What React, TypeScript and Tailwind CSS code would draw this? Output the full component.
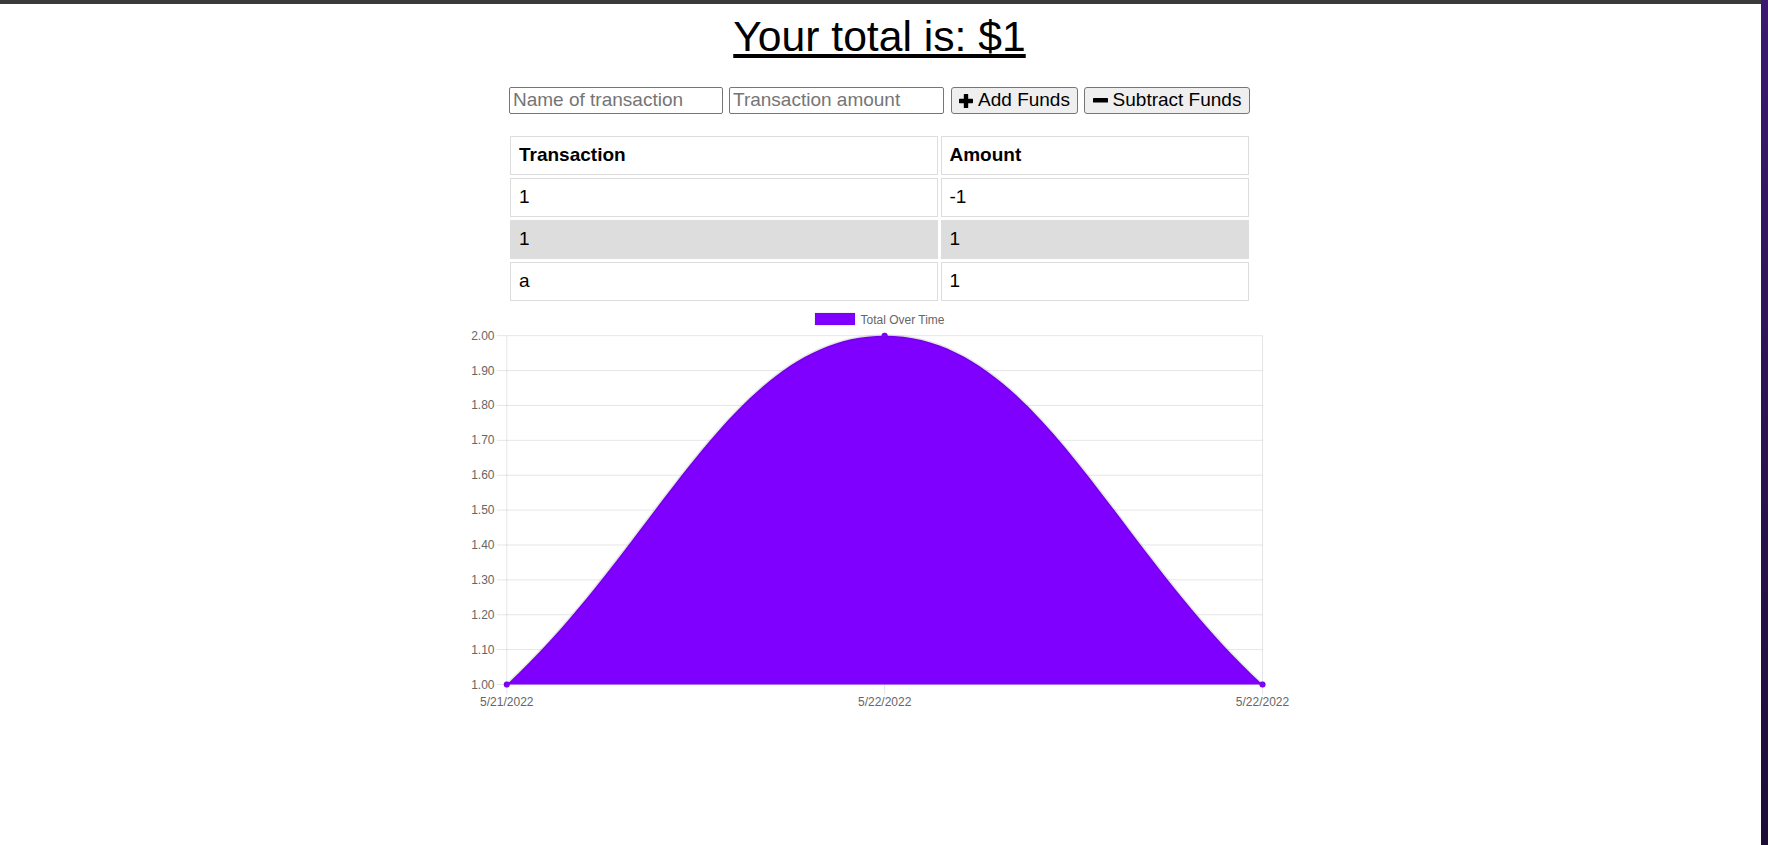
import React from 'react';

const transactions = [
  { name: '1', value: '-1' },
  { name: '1', value: '1' },
  { name: 'a', value: '1' },
];

const purple = '#8000ff';
const grid = 'rgba(0,0,0,0.1)';

// chart area inside the svg (px)
const left = 76.8;
const right = 832.5;
const top = 32.7;
const bottom = 381.5;
const mid = (left + right) / 2;
const step = (bottom - top) / 10;

const yTicks = ['2.00', '1.90', '1.80', '1.70', '1.60', '1.50', '1.40', '1.30', '1.20', '1.10', '1.00'];
const xTicks = [
  { x: left, label: '5/21/2022' },
  { x: mid, label: '5/22/2022' },
  { x: right, label: '5/22/2022' },
];

const curve = `M${left},${bottom} C227.94,241.98 303.51,${top} ${mid},${top} C605.79,${top} 681.36,241.98 ${right},${bottom}`;

const PlusIcon = () => (
  <svg width={14} height={14} viewBox="0 0 14 14" className="shrink-0">
    <path d="M4.8 0.6 Q4.8 0 5.4 0 H8.6 Q9.2 0 9.2 0.6 V4.8 H13.4 Q14 4.8 14 5.4 V8.6 Q14 9.2 13.4 9.2 H9.2 V13.4 Q9.2 14 8.6 14 H5.4 Q4.8 14 4.8 13.4 V9.2 H0.6 Q0 9.2 0 8.6 V5.4 Q0 4.8 0.6 4.8 H4.8 Z" fill="#000" />
  </svg>
);

const MinusIcon = () => (
  <svg width={15} height={5} viewBox="0 0 15 5" className="shrink-0">
    <rect x={0} y={0} width={15} height={4.5} rx={0.6} fill="#000" />
  </svg>
);

const Chart: React.FC = () => (
  <svg width={900} height={420} className="mt-[2px] shrink-0" style={{ fontFamily: '"Liberation Sans", Arial, sans-serif' }}>
    {/* legend */}
    <rect x={385} y={10} width={40} height={12} fill={purple} stroke={grid} strokeWidth={1} />
    <text x={430.5} y={21} fontSize={12} fill="#666">Total Over Time</text>

    {/* grid */}
    {yTicks.map((t, i) => (
      <g key={t}>
        <line x1={left - 10} x2={right} y1={top + i * step} y2={top + i * step} stroke={grid} strokeWidth={1} />
        <text x={64.5} y={top + i * step} fontSize={12} fill="#666" textAnchor="end" dominantBaseline="central">{t}</text>
      </g>
    ))}
    {xTicks.map((t, i) => (
      <g key={i}>
        <line x1={t.x} x2={t.x} y1={top} y2={bottom + 10} stroke={grid} strokeWidth={1} />
        <text x={t.x} y={403} fontSize={12} fill="#666" textAnchor="middle">{t.label}</text>
      </g>
    ))}

    {/* dataset */}
    <path d={`${curve} L${right},${bottom} L${left},${bottom} Z`} fill={purple} />
    <path d={curve} fill="none" stroke={grid} strokeWidth={3} />
    {[[left, bottom], [mid, top], [right, bottom]].map(([cx, cy], i) => (
      <circle key={i} cx={cx} cy={cy} r={3} fill={purple} stroke={grid} strokeWidth={1} />
    ))}
  </svg>
);

const Cell: React.FC<{ children: React.ReactNode; bold?: boolean; shaded?: boolean }> = ({ children, bold, shaded }) => (
  <div
    className={`flex h-[39.3px] items-center border border-[#dddddd] pl-[8px] text-[19px] ${bold ? 'font-bold' : ''} ${
      shaded ? 'bg-[#dddddd]' : 'bg-white'
    }`}
  >
    {children}
  </div>
);

export default function App() {
  return (
    <div className="flex h-[845px] w-full overflow-hidden bg-white" style={{ fontFamily: '"Liberation Sans", Arial, sans-serif' }}>
      <div className="flex min-w-0 flex-1 flex-col">
        <div className="h-[4px] shrink-0 bg-[#3a393c]" />

        <div className="flex flex-col items-center pr-[2px] text-black">
          {/* Total */}
          <h1 className="mt-[8px] text-[42.67px] leading-[48px] underline">Your total is: $1</h1>

          {/* Form */}
          <div className="mt-[27px] flex h-[27px] items-stretch">
            <input
              type="text"
              placeholder="Name of transaction"
              className="w-[214px] rounded-[2px] border border-[#767676] bg-white px-[3px] text-[19px] placeholder:text-[#757575]"
            />
            <input
              type="number"
              placeholder="Transaction amount"
              className="ml-[6px] w-[215px] rounded-[2px] border border-[#767676] bg-white px-[3px] text-[19px] placeholder:text-[#757575]"
            />
            <button className="ml-[7px] flex w-[127px] items-center justify-center gap-[5px] rounded-[3px] border border-[#767676] bg-[#efefef] text-[19px]">
              <PlusIcon />
              Add Funds
            </button>
            <button className="ml-[6px] flex w-[166px] items-center justify-center gap-[5px] rounded-[3px] border border-[#767676] bg-[#efefef] text-[19px]">
              <MinusIcon />
              Subtract Funds
            </button>
          </div>

          {/* Transactions */}
          <div className="mt-[22px] grid grid-cols-[428px_308.5px] gap-x-[2.5px] gap-y-[2.7px]">
            <Cell bold>Transaction</Cell>
            <Cell bold>Amount</Cell>
            {transactions.map((t, i) => (
              <React.Fragment key={i}>
                <Cell shaded={i === 1}>{t.name}</Cell>
                <Cell shaded={i === 1}>{t.value}</Cell>
              </React.Fragment>
            ))}
          </div>

          <Chart />
        </div>
      </div>
      <div className="w-[7px] shrink-0 bg-gradient-to-b from-[#3b1a70] to-[#1d0c36]" />
    </div>
  );
}
